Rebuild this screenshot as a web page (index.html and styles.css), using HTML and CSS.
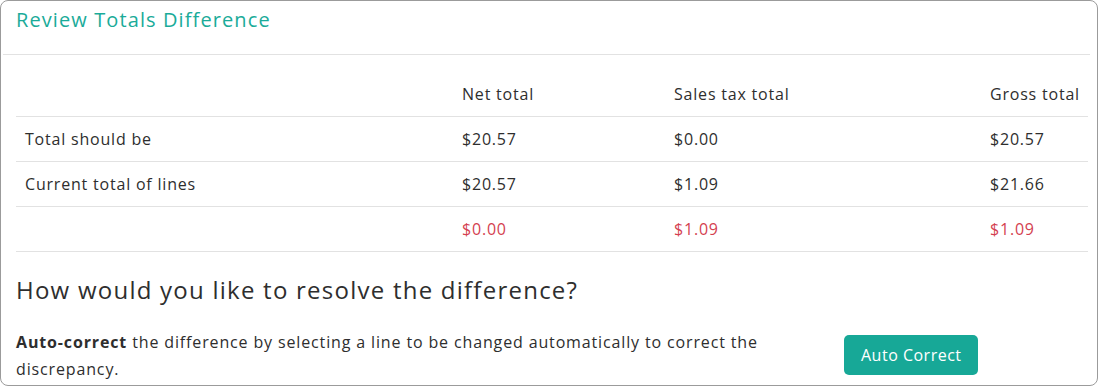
FILE: index.html
```html
<!DOCTYPE html>
<html lang="en">
<head>
<meta charset="utf-8">
<title>Review Totals Difference</title>
<link rel="stylesheet" href="styles.css">
</head>
<body>
<div class="card">
  <div class="card-header">
    <h2 class="card-title">Review Totals Difference</h2>
  </div>
  <div class="card-body">
    <table class="totals">
      <colgroup>
        <col class="c-label">
        <col class="c-net">
        <col class="c-tax">
        <col class="c-gross">
      </colgroup>
      <thead>
        <tr>
          <th></th>
          <th>Net total</th>
          <th>Sales tax total</th>
          <th>Gross total</th>
        </tr>
      </thead>
      <tbody>
        <tr>
          <td>Total should be</td>
          <td>$20.57</td>
          <td>$0.00</td>
          <td>$20.57</td>
        </tr>
        <tr>
          <td>Current total of lines</td>
          <td>$20.57</td>
          <td>$1.09</td>
          <td>$21.66</td>
        </tr>
        <tr class="diff">
          <td></td>
          <td>$0.00</td>
          <td>$1.09</td>
          <td>$1.09</td>
        </tr>
      </tbody>
    </table>
    <h3 class="resolve-title">How would you like to resolve the difference?</h3>
    <div class="option">
      <p class="option-text"><strong>Auto-correct</strong> the difference by selecting a line to be changed automatically to correct the discrepancy.</p>
      <button class="btn-primary" type="button">Auto Correct</button>
    </div>
  </div>
</div>
</body>
</html>
```

FILE: styles.css
```css
html, body {
  margin: 0;
  padding: 0;
  background: #ffffff;
}

body {
  font-family: "Open Sans", "Noto Sans", sans-serif;
  color: #2e2e2e;
  font-size: 16px;
  letter-spacing: 0.8px;
}

.card {
  box-sizing: border-box;
  width: 1098px;
  height: 386px;
  border: 1px solid #9b9b9b;
  border-radius: 8px;
  overflow: hidden;
  background: #fff;
}

.card-header {
  height: 53px;
  margin: 0 7px 0 2px;
  padding: 0 0 0 13px;
  border-bottom: 1px solid #e2e2e2;
}

.card-title {
  margin: 0;
  padding-top: 6px;
  font-size: 20px;
  line-height: 26px;
  font-weight: 400;
  letter-spacing: 1.1px;
  color: #1aab99;
}

.card-body {
  padding: 17px 8px 0 15px;
}

.totals {
  width: 1072px;
  border-collapse: collapse;
  table-layout: fixed;
}

.c-label { width: 437px; }
.c-net { width: 212px; }
.c-tax { width: 316px; }
.c-gross { width: 107px; }

.totals th,
.totals td {
  height: 44px;
  padding: 0 0 0 9px;
  text-align: left;
  font-weight: 400;
  font-size: 16px;
  border-bottom: 1px solid #e2e2e2;
  white-space: nowrap;
  vertical-align: middle;
}

.totals .diff td {
  color: #d43f51;
}

.resolve-title {
  margin: 23px 0 0 0;
  font-size: 24px;
  line-height: 30px;
  font-weight: 400;
  letter-spacing: 1.24px;
  color: #2e2e2e;
}

.option {
  display: flex;
  align-items: center;
  margin-top: 24px;
}

.option-text {
  width: 800px;
  margin: 0;
  line-height: 27px;
  letter-spacing: 0.86px;
  color: #2e2e2e;
}

.option-text strong {
  font-weight: 700;
}

.btn-primary {
  margin: -3px 0 0 28px;
  height: 40px;
  padding: 0 16px 0 17px;
  border: none;
  border-radius: 5px;
  background: #17a897;
  color: #ffffff;
  font-family: inherit;
  font-size: 16px;
  letter-spacing: 0.5px;
}
```
